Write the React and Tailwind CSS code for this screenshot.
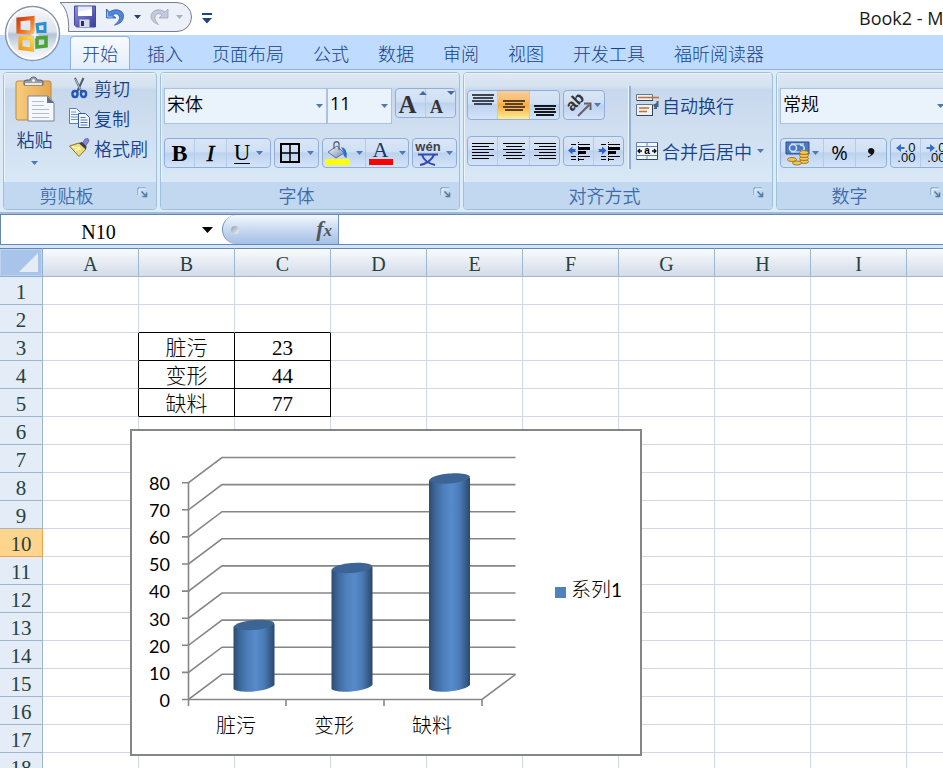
import React from "react";

const UI = "font-['Noto_Sans_CJK_SC',sans-serif]";
const SHEET = "font-['Liberation_Serif','Noto_Sans_CJK_SC',serif]";
const BTN_BG =
  "bg-[linear-gradient(#d8e5f5_0%,#d0e0f4_45%,#bdd2ee_50%,#d3e4f9_100%)]";

const tabs = ["开始", "插入", "页面布局", "公式", "数据", "审阅", "视图", "开发工具", "福昕阅读器"];
const columns = ["A", "B", "C", "D", "E", "F", "G", "H", "I", "J"];
const rows = Array.from({ length: 18 }, (_, i) => i + 1);
const data = { 3: ["脏污", 23], 4: ["变形", 44], 5: ["缺料", 77] };

function Caret({ className = "text-[#5078b5]" }) {
  return (
    <svg width="7" height="4" viewBox="0 0 7 4" className={`shrink-0 ${className}`} aria-hidden="true">
      <path d="M0 0h7L3.5 4z" fill="currentColor" />
    </svg>
  );
}

function OfficeButton() {
  return (
    <button aria-label="Office" className="absolute left-1 top-[5px] z-20 size-[57px]">
      <svg width="57" height="57" viewBox="0 0 57 57">
        <defs>
          <linearGradient id="orb" x1="0" y1="0" x2="0" y2="1">
            <stop offset="0" stopColor="#f6f8fb" />
            <stop offset=".46" stopColor="#dde3ec" />
            <stop offset=".52" stopColor="#b6c3d8" />
            <stop offset=".75" stopColor="#dfe7f1" />
            <stop offset="1" stopColor="#fdfeff" />
          </linearGradient>
          <linearGradient id="orbRed" x1="0" y1="0" x2="1" y2="1">
            <stop offset="0" stopColor="#c93c10" />
            <stop offset=".6" stopColor="#ef7222" />
            <stop offset="1" stopColor="#f9b25a" />
          </linearGradient>
          <linearGradient id="orbYellow" x1="0" y1="1" x2="1" y2="0">
            <stop offset="0" stopColor="#f09a1a" />
            <stop offset="1" stopColor="#fdd645" />
          </linearGradient>
        </defs>
        <circle cx="28.5" cy="28.5" r="27" fill="url(#orb)" stroke="#8796ab" strokeWidth="1.5" />
        <circle cx="28.5" cy="28.5" r="25.3" fill="none" stroke="#fff" strokeWidth="1.6" />
        <path d="M14.5 14.500L28.500 13v13l-2.500 1.500-11.500-1z" fill="none" stroke="url(#orbRed)" strokeWidth="4.200" />
        <path d="M33 19.500l8-1v8h-7z" fill="none" stroke="#2c8fd2" strokeWidth="3" />
        <path d="M16.500 33h9l2.500 1.500v10L16.500 43z" fill="none" stroke="url(#orbYellow)" strokeWidth="4.200" />
        <path d="M33 33l9-.5v8.500l-9 1z" fill="none" stroke="#4ea336" strokeWidth="3.600" />
        <path d="M27.500 30h7M31 26.500v7" stroke="#f4f6f9" strokeWidth="1.500" />
      </svg>
    </button>
  );
}

function TitleBar() {
  return (
    <header className="flex h-[35px] shrink-0 items-start bg-white">
      <div className="relative ml-[60px] flex h-[34px] w-[134px] shrink-0 items-center pl-[13px]">
        <svg width="134" height="34" viewBox="0 0 134 34" className="absolute left-0 top-0" aria-hidden="true">
          <path d="M0 2.500C6 7 9.500 18 8.500 31.500H117a14.500 14.500 0 0 0 0-29z" fill="#ecf0f8" stroke="#767d8c" />
        </svg>
        <button aria-label="保存" className="relative">
          <svg width="24" height="24" viewBox="0 0 24 24">
            <defs>
              <linearGradient id="disk" x1="0" y1="0" x2="1" y2="1">
                <stop offset="0" stopColor="#8f93e0" />
                <stop offset="1" stopColor="#3a3a98" />
              </linearGradient>
            </defs>
            <path d="M1.500 1h21v21h-19l-2-2z" fill="url(#disk)" stroke="#4548a4" />
            <path d="M5 1.500h14V11H5z" fill="#e6ecf6" />
            <path d="M5 7l14-3v7H5z" fill="#fff" />
            <path d="M6.500 14.500h10V22h-10z" fill="#d5dbe6" />
            <path d="M8 16h3v5H8z" fill="#2c2d66" />
          </svg>
        </button>
        <button aria-label="撤消" className="relative ml-[7px]">
          <svg width="22" height="22" viewBox="0 0 22 22">
            <path d="M2.500 3v9h9.500L8.500 9c4-3 7.500 0 7 3.500-.5 2.500-3 5-5 6.500 6-1 9-4.500 9-9 0-6.500-9-8-14-4z" fill="#4f86d8" stroke="#2a5cae" strokeWidth=".8" />
            <path d="M3.500 5.500V11h5" fill="none" stroke="#9fc3f2" />
          </svg>
        </button>
        <button aria-label="撤消选项" className="relative ml-2">
          <Caret className="text-[#1a4480]" />
        </button>
        <button aria-label="恢复" className="relative ml-[9px]">
          <svg width="20" height="22" viewBox="0 0 20 22">
            <path d="M18 3v9H9l3-3C8 6 4.500 9 5 12.500c.5 2.500 2 4.500 3.500 6C4 17 1 14 1 10.500 1 4.500 9 1.500 15 6z" fill="#c1cbd9" stroke="#9ba8b9" strokeWidth=".8" />
          </svg>
        </button>
        <button aria-label="恢复选项" className="relative ml-1.5">
          <Caret className="text-[#a8b0bc]" />
        </button>
      </div>
      <button aria-label="自定义快速访问工具栏" className="ml-2 mt-3">
        <svg width="10" height="12" viewBox="0 0 10 12">
          <path d="M0 1h10v2H0zM0 6h10L5 11.500z" fill="#1d4683" />
        </svg>
      </button>
      <h1 className="ml-auto w-[84px] overflow-hidden whitespace-nowrap pt-[6px] font-['Open_Sans',sans-serif] text-[18px] font-normal leading-6 text-[#1a1a1a]">
        Book2 - Microsoft Excel
      </h1>
    </header>
  );
}

function TabBar() {
  return (
    <nav className="flex h-[35px] shrink-0 items-end gap-[5px] overflow-hidden border-b border-[#8db2e3] bg-[#bfdbff] pl-[70px]">
      {tabs.map((t, i) => (
        <button
          key={t}
          className={
            "h-[33px] shrink-0 text-[18px] leading-8 text-[#15428b] " +
            (i === 0
              ? "rounded-t border border-b-0 border-[#8db2e3] bg-[linear-gradient(#f8fbff,#e3edfa)] px-[11px]"
              : "px-3")
          }
        >
          {t}
        </button>
      ))}
    </nav>
  );
}

function Group({ label, width, children }) {
  return (
    <section
      aria-label={label}
      className={`flex h-[138px] shrink-0 flex-col overflow-hidden rounded border border-[#9fbfdb] bg-[linear-gradient(#dfe8f3_0px,#d5e1ef_14px,#c8d8ec_16px,#d9e8f6_110px)] ${width}`}
    >
      <div className="h-[110px] shadow-[inset_1px_1px_0_#edf3fa]">{children}</div>
      <div className="flex h-[27px] items-center bg-[#c1d8f0] pb-0.5 pr-2">
        <span className="flex-1 pr-2 text-center text-[18px] leading-6 text-[#3e6aaa]">{label}</span>
        <button aria-label={`${label}设置`}>
          <svg width="11" height="11" viewBox="0 0 11 11" className="mb-1">
            <path d="M1 8V1h8" fill="none" stroke="#6690bd" />
            <path d="M2 8V2h7" fill="none" stroke="#fff" />
            <path d="M4.500 4.500l4 4M9.500 5.500v4h-4" fill="none" stroke="#52799f" strokeWidth="1.500" />
          </svg>
        </button>
      </div>
    </section>
  );
}

function ButtonSet({ children }) {
  return (
    <div className={`flex h-[30px] shrink-0 divide-x divide-[#b4cbea] overflow-hidden rounded-sm border border-[#90aedb] ${BTN_BG}`}>
      {children}
    </div>
  );
}

function Tool({ label, width, active, children }) {
  return (
    <button
      aria-label={label}
      className={
        `flex h-full shrink-0 items-center justify-center gap-1.5 text-black ${width} ` +
        (active ? "bg-[linear-gradient(#f9ce9d_0%,#fbb960_40%,#fba83c_50%,#fdf09b_100%)]" : "")
      }
    >
      {children}
    </button>
  );
}

function Dropdown({ label, value, width, latin }) {
  return (
    <label className={`relative block h-9 shrink-0 ${width}`}>
      <span className="sr-only">{label}</span>
      <select
        className={
          "h-full w-full appearance-none border border-[#abc1de] bg-[#eaf2fb] pb-1.5 pl-0.5 text-[18px] leading-6 text-black " +
          (latin ? "font-['Open_Sans',sans-serif] font-normal" : "")
        }
      >
        <option>{value}</option>
      </select>
      <Caret className="pointer-events-none absolute right-1 top-4 text-[#5078b5]" />
    </label>
  );
}

/* Horizontal strokes given as [x, y, width] */
function Lines({ strokes, color = "#000", thick = 1 }) {
  return (
    <svg width="26" height="24" viewBox="0 0 26 24" aria-hidden="true">
      {strokes.map(([x, y, l]) => (
        <rect key={y} x={x} y={y} width={l} height={thick} fill={color} />
      ))}
    </svg>
  );
}

function IndentIcon({ flip }) {
  return (
    <svg width="24" height="22" viewBox="0 0 24 22" aria-hidden="true">
      <path d="M4 4.500h5M4 16.500h5M11 4.500h12M11 16.500h12M4 19.500h5M11 19.500h6" stroke="#000" />
      <path d="M11.500 2v1M11.500 6v1M11.500 14v1M11.500 18v3" stroke="#000" />
      <path d="M11 7h12v3H11zM11 11h8v3h-8z" fill="#000" />
      <path d={flip ? "M1 9h4V6.500L9.500 10.500 5 14.500V12H1l1.500-1.500z" : "M9 9H5.500V6.500L1 10.500l4.500 4V12H9l-1-1.500z"} fill="#2f5fca" />
    </svg>
  );
}

function ClipboardGroup() {
  return (
    <Group label="剪贴板" width="w-[154px]">
      <div className="flex">
        <button className="flex w-[61px] flex-col items-center pt-[3px] text-[18px] leading-6 text-[#15428b]">
          <svg width="42" height="48" viewBox="0 0 42 48" aria-hidden="true">
            <defs>
              <linearGradient id="board" x1="0" x2="1">
                <stop offset="0" stopColor="#f8cd7d" />
                <stop offset="1" stopColor="#e4a750" />
              </linearGradient>
            </defs>
            <rect x="2" y="5" width="35" height="39" rx="2" fill="url(#board)" stroke="#b98a48" />
            <path d="M10 9V6q0-2 3-2h3c0-4 7-4 7 0h3q3 0 3 2v3z" fill="#9a9fa7" stroke="#5d6269" />
            <path d="M11 8h17" stroke="#e6e8eb" strokeWidth="2" />
            <circle cx="19.500" cy="4.500" r="1.500" fill="#f3f3f3" />
            <path d="M14 20h20l6 7v18H14z" fill="#f5f8fd" stroke="#778596" />
            <path d="M33 20v7h7z" fill="#637183" />
            <path d="M18 25.500h12M18 29.500h12M18 33.500h17M18 37.500h17M18 41.500h17" stroke="#b4bdcb" />
          </svg>
          <span className="pt-[3px]">粘贴</span>
          <Caret className="mt-2.5 text-[#5078b5]" />
        </button>
        <div className="flex flex-col pl-1 text-[18px] text-[#15428b]">
          <button className="flex h-[30px] items-center gap-1 leading-7">
            <svg width="21" height="24" viewBox="0 0 21 24" aria-hidden="true">
              <path d="M6 2l6.500 14M14.500 2L8 16" stroke="#4c5a6e" strokeWidth="2" />
              <path d="M6.500 3l5 11" stroke="#dbe2ec" strokeWidth=".8" />
              <ellipse cx="6" cy="18" rx="2.600" ry="3" fill="none" stroke="#2458b8" strokeWidth="2.400" />
              <ellipse cx="14.500" cy="18" rx="2.600" ry="3" fill="none" stroke="#2458b8" strokeWidth="2.400" />
            </svg>
            剪切
          </button>
          <button className="flex h-[30px] items-center gap-1 leading-7">
            <svg width="21" height="22" viewBox="0 0 21 22" aria-hidden="true">
              <path d="M.5 1.500h7l4 4v11H.5z" fill="#f3f7ff" stroke="#5f7eb5" />
              <path d="M2 5h5M2 7.500h7M2 10h7M2 12.500h7" stroke="#6e92d1" />
              <path d="M9.500 6.500h7l4 4v10h-11z" fill="#f3f7ff" stroke="#35589f" />
              <path d="M11.500 10.500h5M11.500 13h7M11.500 15.500h7M11.500 18h7" stroke="#4c77c2" />
            </svg>
            复制
          </button>
          <button className="flex h-[30px] items-center gap-1 leading-7">
            <svg width="21" height="20" viewBox="0 0 21 20" aria-hidden="true">
              <path d="M13 6l3-5 3-.5 1 2.500-4 6z" fill="#8d82cf" stroke="#5f579c" strokeWidth=".7" />
              <path d="M.5 8L10 5l7 6-7 7.500z" fill="#eedb79" stroke="#85752e" />
              <path d="M10 5l3-1 4.500 4.500-.5 3z" fill="#3c3d44" />
              <path d="M3 9l8 1M6 12l6-1" stroke="#fff7bd" strokeWidth="1.500" />
            </svg>
            格式刷
          </button>
        </div>
      </div>
    </Group>
  );
}

function FontGroup() {
  return (
    <Group label="字体" width="w-[300px]">
      <div className="flex flex-col gap-3.5 pl-[3px] pt-[15px]">
        <div className="flex">
          <Dropdown label="字体" value="宋体" width="w-[163px]" />
          <Dropdown label="字号" value="11" width="w-[65px]" latin />
          <div className="ml-[3px]">
            <ButtonSet>
              <Tool label="增大字号" width="w-[30px]">
                <span className="relative pr-1.5 pt-1 font-['Liberation_Serif',serif] text-[25px] font-bold leading-6 text-[#333]">
                  A
                  <svg width="8" height="4" viewBox="0 0 8 4" className="absolute -right-1 top-0.5"><path d="M0 4h8L4 0z" fill="#4a67a5" /></svg>
                </span>
              </Tool>
              <Tool label="减小字号" width="w-[29px]">
                <span className="relative pr-2 pt-2 font-['Liberation_Serif',serif] text-[18px] font-bold leading-5 text-[#333]">
                  A
                  <svg width="8" height="4" viewBox="0 0 8 4" className="absolute -right-1 top-0.5"><path d="M0 0h8L4 4z" fill="#4a67a5" /></svg>
                </span>
              </Tool>
            </ButtonSet>
          </div>
        </div>
        <div className="flex gap-[3px]">
          <ButtonSet>
            <Tool label="加粗" width="w-[30px]">
              <span className="font-['Liberation_Serif',serif] text-[24px] font-bold leading-6">B</span>
            </Tool>
            <Tool label="倾斜" width="w-[32px]">
              <span className="font-['Liberation_Serif',serif] text-[24px] font-normal italic leading-6 [-webkit-text-stroke:0.4px]">I</span>
            </Tool>
            <Tool label="下划线" width="w-[43px]">
              <span className="border-b border-black font-['Liberation_Serif',serif] text-[23px] font-normal leading-5">U</span>
              <Caret />
            </Tool>
          </ButtonSet>
          <ButtonSet>
            <Tool label="边框" width="w-[43px]">
              <svg width="22" height="22" viewBox="0 0 22 22"><path d="M2 2h18v18H2z" fill="none" stroke="#000" strokeWidth="2" /><path d="M11 2v18M2 11h18" stroke="#000" strokeWidth="1.500" /></svg>
              <Caret />
            </Tool>
          </ButtonSet>
          <ButtonSet>
            <Tool label="填充颜色" width="w-[43px]">
              <svg width="25" height="24" viewBox="0 0 25 24">
                <defs>
                  <linearGradient id="bucket" x1="0" y1="0" x2="1" y2="1">
                    <stop offset="0" stopColor="#fff" />
                    <stop offset="1" stopColor="#6d87b5" />
                  </linearGradient>
                </defs>
                <path d="M16 6q7 1 5.500 11-4-2-3-6z" fill="#2d6fd0" />
                <path d="M3 11l9-6 7 7-8 5z" fill="url(#bucket)" stroke="#5f7497" />
                <path d="M9 8V3c0-3 5-3 5 0v6" fill="none" stroke="#5e6572" strokeWidth="1.300" />
                <path d="M0 18h25v6H0z" fill="#ff0" />
              </svg>
              <Caret />
            </Tool>
            <Tool label="字体颜色" width="w-[42px]">
              <span className="flex flex-col items-center">
                <span className="font-['Liberation_Serif',serif] text-[22px] font-normal leading-[18px] text-[#1b3565]">A</span>
                <span className="h-1.5 w-6 bg-[#f00]" />
              </span>
              <Caret />
            </Tool>
          </ButtonSet>
          <ButtonSet>
            <Tool label="拼音指南" width="w-[43px]">
              <span className="flex w-6 flex-col items-center">
                <span className="font-['Liberation_Sans',sans-serif] text-[13px] font-bold leading-[11px] text-[#3b3f48]">wén</span>
                <svg width="20" height="14" viewBox="0 0 20 14"><path d="M0 2.500h20M4 3q3 8 13 10M16 3Q12 11 2 13" fill="none" stroke="#3447ba" strokeWidth="2" /></svg>
              </span>
              <Caret />
            </Tool>
          </ButtonSet>
        </div>
      </div>
    </Group>
  );
}

function AlignGroup() {
  return (
    <Group label="对齐方式" width="w-[310px]">
      <div className="flex pl-[3px]">
        <div className="flex flex-col gap-4 pt-[17px]">
          <div className="flex gap-[3px]">
            <ButtonSet>
              <Tool label="顶端对齐" width="w-[30px]">
                <Lines color="#3f4652" thick={2} strokes={[[2, 1, 22], [3, 4, 20], [2, 7, 22], [4, 10, 18]]} />
              </Tool>
              <Tool label="垂直居中" width="w-[32px]" active>
                <Lines color="#5c4024" thick={2} strokes={[[2, 7, 22], [4, 10, 18], [2, 13, 22], [4, 16, 18]]} />
              </Tool>
              <Tool label="底端对齐" width="w-[29px]">
                <Lines color="#14181f" thick={2} strokes={[[2, 12, 22], [3, 15, 20], [2, 18, 22], [4, 21, 18]]} />
              </Tool>
            </ButtonSet>
            <ButtonSet>
              <Tool label="方向" width="w-[40px]">
                <svg width="25" height="24" viewBox="0 0 25 24">
                  <text x="5" y="19" transform="rotate(-45 5 19)" fontFamily="Liberation Sans" fontWeight="bold" fontSize="16" fill="#333">ab</text>
                  <path d="M11 23L22 12M17 10.500h6.500V17" fill="none" stroke="#6b5f66" strokeWidth="2" />
                </svg>
                <Caret className="-ml-1 text-[#5078b5]" />
              </Tool>
            </ButtonSet>
          </div>
          <div className="flex gap-[3px]">
            <ButtonSet>
              <Tool label="左对齐" width="w-[30px]">
                <Lines strokes={[[2, 4, 22], [2, 7, 17], [2, 10, 22], [2, 13, 17], [2, 16, 22], [2, 19, 17]]} />
              </Tool>
              <Tool label="居中" width="w-[32px]">
                <Lines strokes={[[2, 4, 22], [5, 7, 16], [2, 10, 22], [5, 13, 16], [2, 16, 22], [5, 19, 16]]} />
              </Tool>
              <Tool label="右对齐" width="w-[29px]">
                <Lines strokes={[[2, 4, 22], [7, 7, 17], [2, 10, 22], [7, 13, 17], [2, 16, 22], [7, 19, 17]]} />
              </Tool>
            </ButtonSet>
            <ButtonSet>
              <Tool label="减少缩进量" width="w-[30px]"><IndentIcon /></Tool>
              <Tool label="增加缩进量" width="w-[29px]"><IndentIcon flip /></Tool>
            </ButtonSet>
          </div>
        </div>
        <div className="ml-1 mt-[13px] h-[83px] w-[3px] border-r-2 border-[#8fb0dd] bg-[#eef4fb]" />
        <div className="flex flex-col gap-4 pl-1 pt-[17px] text-[18px] text-[#15428b]">
          <button className="flex h-[30px] items-center gap-[3px] leading-7">
            <svg width="24" height="24" viewBox="0 0 24 24" aria-hidden="true">
              <path d="M1.500 1.500h16v6h-16zM1.500 11.500h16v11h-16z" fill="#eef1f6" stroke="#66758a" />
              <path d="M2 7.500h16M2 22.500h16M17.500 12v11" stroke="#33435a" />
              <path d="M3 4.500h21M4 15h10M4 18.500h8" stroke="#bb7232" strokeWidth="1.500" />
              <path d="M22.500 8v5h-2" fill="none" stroke="#4b6080" strokeWidth="2" />
              <path d="M22 10v6h-3.500l1-1.500-1.500-3z" fill="#4b6080" />
            </svg>
            自动换行
          </button>
          <button className="flex h-[30px] items-center gap-[3px] leading-7">
            <svg width="24" height="20" viewBox="0 0 24 20" aria-hidden="true">
              <path d="M1.500 1.500h21v17h-21zM1.500 5.500h21M1.500 14.500h21M12 1.500v4M12 14.500v4" fill="#f3f7fe" stroke="#6683b5" />
              <path d="M1.500 18.500h21v-17" fill="none" stroke="#2e4a7d" />
              <path d="M7 10H3m2-2l-2 2 2 2M17 10h4m-2-2l2 2-2 2" fill="none" stroke="#111" strokeWidth="1.300" />
              <text x="12" y="13" textAnchor="middle" fontFamily="Liberation Sans" fontSize="10" fontWeight="bold">a</text>
            </svg>
            合并后居中
            <Caret className="ml-0.5 text-[#5078b5]" />
          </button>
        </div>
      </div>
    </Group>
  );
}

function DecimalIcon({ flip }) {
  return (
    <span className="flex flex-col items-end font-['Liberation_Sans',sans-serif] text-[13px] font-normal leading-[10px] text-[#111]">
      <span className="flex items-center">
        <svg width="9" height="8" viewBox="0 0 9 8" aria-hidden="true">
          <path d={flip ? "M0 3h4V0l5 4-5 4V5H0l1-1z" : "M9 3H5V0L0 4l5 4V5h4L8 4z"} fill="#356cc6" />
        </svg>
        .0
      </span>
      <span>.00</span>
    </span>
  );
}

function NumberGroup() {
  return (
    <Group label="数字" width="w-[174px]">
      <div className="flex flex-col gap-3.5 pl-[3px] pt-[15px]">
        <Dropdown label="数字格式" value="常规" width="w-[168px]" />
        <div className="flex gap-[3px]">
          <ButtonSet>
            <Tool label="会计数字格式" width="w-[43px]">
              <svg width="25" height="26" viewBox="0 0 25 26">
                <path d="M1 2h23v12H1z" fill="#4a79c4" stroke="#274f98" />
                <path d="M6 4h13M6 12h13" stroke="#bdd3f3" strokeWidth="1.500" />
                <circle cx="8" cy="8" r="3.500" fill="none" stroke="#d5e4fa" strokeWidth="1.500" />
                <path d="M15 5c5 0 6 6 1 6" fill="none" stroke="#d5e4fa" strokeWidth="1.500" />
                <g fill="#f6c64c" stroke="#8d671a" strokeWidth=".8">
                  <ellipse cx="19" cy="21.500" rx="4.500" ry="2" />
                  <ellipse cx="19" cy="18.500" rx="4.500" ry="2" />
                  <ellipse cx="19" cy="15.500" rx="4.500" ry="2" />
                  <ellipse cx="19" cy="12.500" rx="4.500" ry="2" />
                  <ellipse cx="7" cy="19.500" rx="4.500" ry="2" />
                  <ellipse cx="12" cy="23" rx="4.500" ry="2" />
                </g>
              </svg>
              <Caret className="-ml-1 text-[#5078b5]" />
            </Tool>
            <Tool label="百分比样式" width="w-[32px]">
              <span className="font-['Open_Sans',sans-serif] text-[20px] font-normal leading-6">%</span>
            </Tool>
            <Tool label="千位分隔样式" width="w-[30px]">
              <svg width="8" height="10" viewBox="0 0 8 10"><path d="M4 0c5 0 5 7-3 9.500l-.3-1C3 8 4 7 4 6 0 6 0 0 4 0z" fill="#111" /></svg>
            </Tool>
          </ButtonSet>
          <ButtonSet>
            <Tool label="增加小数位数" width="w-[30px]"><DecimalIcon /></Tool>
            <Tool label="减少小数位数" width="w-[29px]"><DecimalIcon flip /></Tool>
          </ButtonSet>
        </div>
      </div>
    </Group>
  );
}

function FormulaBar() {
  return (
    <div className="flex h-[34px] shrink-0 flex-col bg-[#d5e4f7]">
      <div className="flex h-[31px] border-y border-[#6489b7] bg-white">
        <label className="flex w-[200px] shrink-0 border-l border-[#6489b7]">
          <span className="sr-only">名称框</span>
          <input defaultValue="N10" className={`w-full bg-transparent pr-1 pt-1 text-center text-[20px] font-normal leading-6 text-black ${SHEET}`} />
        </label>
        <button aria-label="名称列表" className="flex w-[22px] shrink-0 items-center pl-0.5">
          <svg width="11" height="6" viewBox="0 0 11 6"><path d="M0 0h11L5.500 6z" /></svg>
        </button>
        <div className="flex w-[117px] shrink-0 items-center justify-between rounded-l-full border-x border-[#6f92c0] bg-[linear-gradient(#f4f8fd,#c9d9f0_50%,#a4bfe6)] pl-2 pr-1.5">
          <span className="size-2 rounded-full bg-[linear-gradient(135deg,#8d9bb0,#f4f7fb)]" />
          <button aria-label="插入函数" className="font-['Liberation_Serif',serif] text-[22px] font-bold italic leading-7 text-[#4d5560]">
            f<span className="text-[17px]">x</span>
          </button>
        </div>
        <input aria-label="编辑栏" className="min-w-0 flex-1 bg-transparent px-1" />
      </div>
    </div>
  );
}

function Sheet() {
  return (
    <table className={`w-[1003px] table-fixed border-separate border-spacing-0 text-[21px] leading-6 text-black ${SHEET}`}>
      <colgroup>
        <col className="w-[43px]" />
        {columns.map((c) => (
          <col key={c} className="w-[96px]" />
        ))}
      </colgroup>
      <thead>
        <tr className="h-[29px]">
          <th className="border-b border-r border-t border-[#8fb0d5] border-t-[#6489b7] bg-[#a9c4e9] p-0">
            <button aria-label="全选" className="flex h-[27px] w-full items-end justify-end border border-[#bfd3ee] p-[3px]">
              <svg width="19" height="19" viewBox="0 0 19 19"><path d="M19 0v19H0z" fill="#e6ecf4" /></svg>
            </button>
          </th>
          {columns.map((c) => (
            <th key={c} scope="col" className="border-b border-r border-t border-[#9eb6ce] border-t-[#6489b7] bg-[linear-gradient(#f9fbfd,#d3dbe9)] px-0 pb-0 pt-1 text-[20px] font-normal leading-[23px] text-[#27413e]">
              {c}
            </th>
          ))}
        </tr>
      </thead>
      <tbody>
        {rows.map((r) => (
          <tr key={r} className="h-7">
            <th
              scope="row"
              className={
                "border-b border-r px-0 pb-0 pt-[3px] font-normal text-[#27413e] " +
                (r === 10 ? "border-[#f2a14b] bg-[#ffd58d]" : "border-[#9eb6ce] bg-[#e4ecf7]")
              }
            >
              {r}
            </th>
            {columns.map((c, i) => {
              const row = data[r];
              const filled = row && (i === 1 || i === 2);
              const right = row && i <= 2 ? "border-r-black" : "border-r-[#d0d7e5]";
              const bottom = r >= 2 && r <= 5 && (i === 1 || i === 2) ? "border-b-black" : "border-b-[#d0d7e5]";
              return (
                <td key={c} className={`border-b border-r bg-white px-0 pb-0 pt-[3px] text-center ${right} ${bottom}`}>
                  {filled ? row[i - 1] : null}
                </td>
              );
            })}
          </tr>
        ))}
      </tbody>
    </table>
  );
}

function Cylinder({ x, top }) {
  const r = x + 41;
  return (
    <g>
      <path d={`M${x} ${top + 7}V689C${x + 6} 694 ${x + 34} 692 ${r} 685V${top + 4}z`} fill="url(#bar)" />
      <path
        d={`M${x} ${top + 7}C${x + 2} ${top} ${x + 36} ${top - 3} ${r} ${top + 3}C${x + 38} ${top + 10} ${x + 8} ${top + 13} ${x} ${top + 7}z`}
        fill="#3c6494"
      />
    </g>
  );
}

function Chart() {
  const ticks = [80, 70, 60, 50, 40, 30, 20, 10, 0];
  return (
    <figure className="absolute left-[130px] top-[181px] h-[327px] w-[512px] border-2 border-[#868686] bg-white">
      <svg width="508" height="323" viewBox="132 431 508 323" role="img" aria-label="系列1 三维柱形图">
        <defs>
          <linearGradient id="bar">
            <stop offset="0" stopColor="#2c4b70" />
            <stop offset=".15" stopColor="#3d6799" />
            <stop offset=".35" stopColor="#4c7fbb" />
            <stop offset=".55" stopColor="#568bcb" />
            <stop offset=".75" stopColor="#4a7bb6" />
            <stop offset="1" stopColor="#2a486c" />
          </linearGradient>
        </defs>
        <g stroke="#868686" strokeWidth="1.600" fill="none">
          {ticks.map((t, i) => (
            <path key={t} d={`M182 ${482.7 + 27.1 * i}H188.500L222 ${457.5 + 27.1 * i}H515.500`} />
          ))}
          <path d="M188.500 482V706M188.500 699.500H482L515.500 674.300M286 699.500V706M384 699.500V706M482 699.500V706" />
        </g>
        <Cylinder x={233.5} top={620} />
        <Cylinder x={331.5} top={563} />
        <Cylinder x={429} top={473.5} />
        <g fontFamily="Lato, sans-serif" fontSize="18" fontWeight="400" textAnchor="end">
          {ticks.map((t, i) => (
            <text key={t} x="170" y={Math.round(490 + 27.1 * i)}>{t}</text>
          ))}
        </g>
        <g fontFamily="'Noto Sans CJK SC', sans-serif" fontWeight="300" fontSize="20" textAnchor="middle">
          <text x="236" y="733">脏污</text>
          <text x="334" y="733">变形</text>
          <text x="432" y="733">缺料</text>
        </g>
        <rect x="555" y="587" width="11" height="11" fill="#4f81bd" />
        <text x="571" y="597" fontFamily="Lato, 'Noto Sans CJK SC', sans-serif" fontWeight="300" fontSize="20">
          系列<tspan fontWeight="400" fontSize="19">1</tspan>
        </text>
      </svg>
    </figure>
  );
}

export default function App() {
  return (
    <div className={`relative flex h-screen flex-col overflow-hidden bg-white font-light ${UI}`}>
      <OfficeButton />
      <TitleBar />
      <TabBar />
      <div className="flex h-[144px] shrink-0 gap-[3px] overflow-hidden border-b-2 border-[#a3b9d6] bg-[#dcebf8] pl-[3px] pt-0.5 font-[350]">
        <ClipboardGroup />
        <FontGroup />
        <AlignGroup />
        <NumberGroup />
      </div>
      <FormulaBar />
      <main className="relative min-h-0 flex-1 overflow-hidden">
        <Sheet />
        <Chart />
      </main>
    </div>
  );
}
